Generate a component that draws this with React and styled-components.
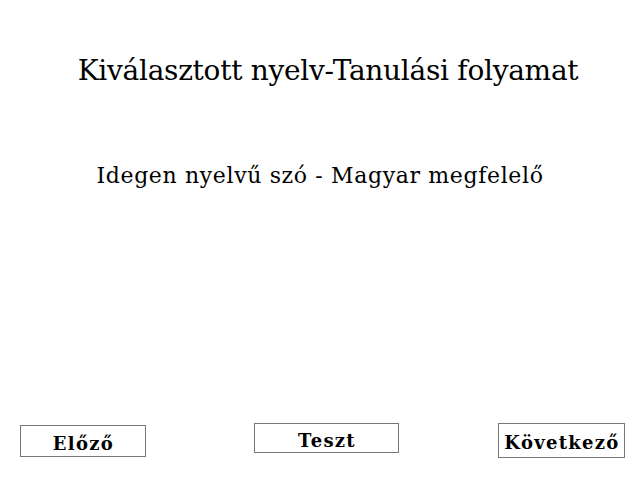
import React from 'react'
import styled, { createGlobalStyle } from 'styled-components'

const GlobalStyle = createGlobalStyle`
    body {
        margin: 0;
        background: #ffffff;
        font-family: "DejaVu Serif", serif;
        color: #000000;
    }
`

const Page = styled.div`
    width: 640px;
    height: 480px;
    display: flex;
    flex-direction: column;
`

const Title = styled.h1`
    margin: 52px 0 0 16px;
    font-size: 28px;
    font-weight: normal;
    letter-spacing: -0.28px;
    text-align: center;
    line-height: 38px;
`

const Word = styled.p`
    margin: 71px 0 0 0;
    font-size: 22px;
    letter-spacing: 0.64px;
    text-align: center;
    line-height: 30px;
`

const Controls = styled.div`
    margin-top: auto;
    margin-bottom: 22px;
    padding: 0 0 0 20px;
    display: flex;
    align-items: flex-start;
`

const NavButton = styled.button`
    width: ${({ w }) => w}px;
    height: ${({ h }) => h}px;
    margin-top: ${({ offset }) => offset || 0}px;
    margin-left: ${({ lead }) => lead || 0}px;
    padding: 4px 0 0 1px;
    background: #ffffff;
    border: 1px solid #767676;
    font-family: "DejaVu Serif", serif;
    font-weight: bold;
    font-size: 18px;
    letter-spacing: 1.3px;
    color: #000000;
`

export default function App() {
    return (
        <Page>
            <GlobalStyle />
            <Title>Kiválasztott nyelv-Tanulási folyamat</Title>
            <Word>Idegen nyelvű szó - Magyar megfelelő</Word>
            <Controls>
                <NavButton w={126} h={32} offset={2}>Előző</NavButton>
                <NavButton w={145} h={30} lead={108}>Teszt</NavButton>
                <NavButton w={127} h={35} lead={99}>Következő</NavButton>
            </Controls>
        </Page>
    )
}
